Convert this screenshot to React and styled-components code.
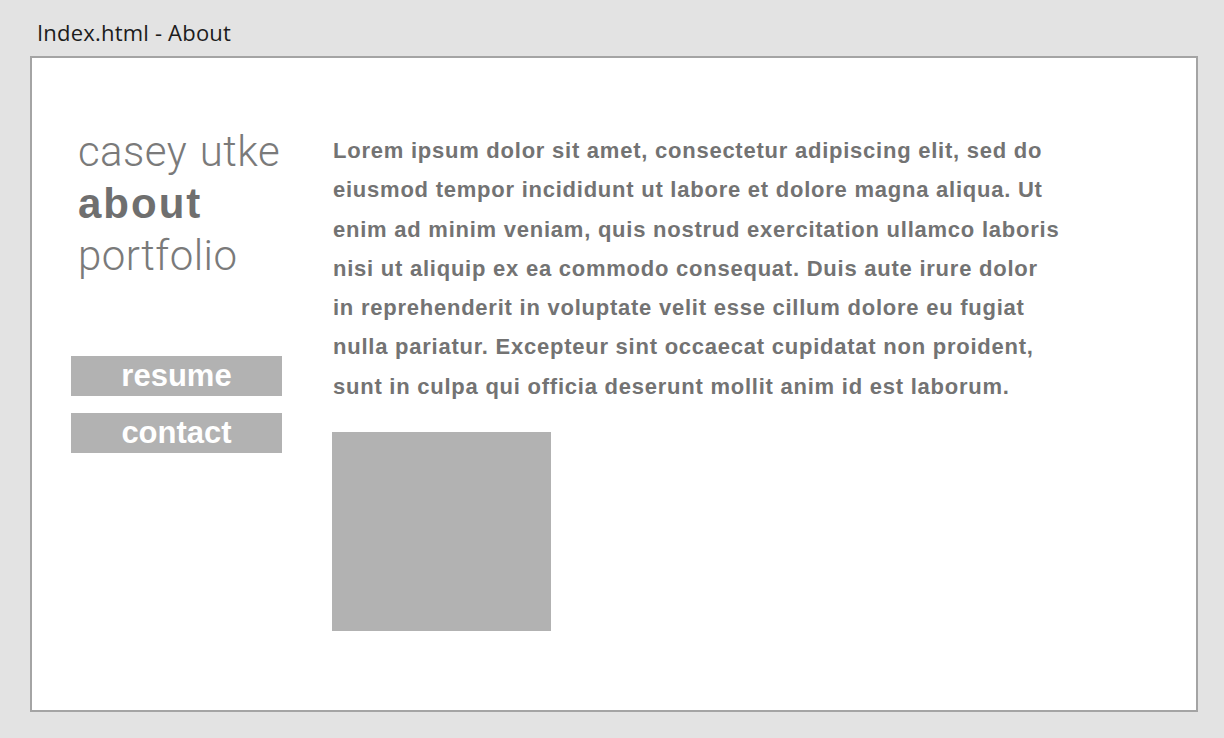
import React from "react";
import styled, { createGlobalStyle } from "styled-components";

const GlobalStyle = createGlobalStyle`
  html, body {
    margin: 0;
    padding: 0;
    background: #e3e3e3;
  }
  body {
    width: 1224px;
    height: 738px;
    overflow: hidden;
  }
`;

const lines = [
  "Lorem ipsum dolor sit amet, consectetur adipiscing elit, sed do",
  "eiusmod tempor incididunt ut labore et dolore magna aliqua. Ut",
  "enim ad minim veniam, quis nostrud exercitation ullamco laboris",
  "nisi ut aliquip ex ea commodo consequat. Duis aute irure dolor",
  "in reprehenderit in voluptate velit esse cillum dolore eu fugiat",
  "nulla pariatur. Excepteur sint occaecat cupidatat non proident,",
  "sunt in culpa qui officia deserunt mollit anim id est laborum.",
];

const App = () => {
  return (
    <Screen>
      <GlobalStyle />
      <WindowTitle>Index.html - About</WindowTitle>
      <Frame>
        {/* left column: name, nav, buttons */}
        <Sidebar>
          <NavList>
            <NavItem>casey utke</NavItem>
            <NavItem active>about</NavItem>
            <NavItem>portfolio</NavItem>
          </NavList>
          <Buttons>
            <GreyButton>resume</GreyButton>
            <GreyButton>contact</GreyButton>
          </Buttons>
        </Sidebar>

        {/* right column: text + picture placeholder */}
        <Content>
          <Body>
            {lines.map((l, i) => (
              <React.Fragment key={i}>
                {l}
                {i < lines.length - 1 && <br />}
              </React.Fragment>
            ))}
          </Body>
          <Placeholder />
        </Content>
      </Frame>
    </Screen>
  );
};

// Style
const Screen = styled.div`
  display: flex;
  flex-direction: column;
  padding: 0 26px 0 30px;
`;
const WindowTitle = styled.div`
  box-sizing: border-box;
  height: 56px;
  padding: 20px 0 0 7px;
  font-family: "Open Sans", "Liberation Sans", sans-serif;
  font-size: 22px;
  letter-spacing: 0.2px;
  line-height: 24px;
  color: #1c1c1c;
`;
const Frame = styled.div`
  box-sizing: border-box;
  width: 1168px;
  height: 656px;
  border: 2px solid #a4a4a4;
  background: #ffffff;
  display: flex;
  align-items: flex-start;
  gap: 50px;
  padding: 66px 0 0 39px;
`;
const Sidebar = styled.div`
  width: 211px;
  display: flex;
  flex-direction: column;
  gap: 74px;
`;
const NavList = styled.div`
  display: flex;
  flex-direction: column;
  padding: 2px 0 0 7px;
`;
const NavItem = styled.div`
  font-family: ${(p) =>
    p.active ? `"Liberation Sans", Arial, sans-serif` : `Roboto, "Liberation Sans", sans-serif`};
  font-size: 42px;
  line-height: 52px;
  font-weight: ${(p) => (p.active ? 700 : 300)};
  letter-spacing: ${(p) => (p.active ? "2px" : "0.45px")};
  word-spacing: 2px;
  white-space: nowrap;
  color: ${(p) => (p.active ? "#6f6f6f" : "#7a7a7a")};
`;
const Buttons = styled.div`
  display: flex;
  flex-direction: column;
  gap: 17px;
`;
const GreyButton = styled.div`
  height: 40px;
  background: #b2b2b2;
  color: #ffffff;
  font-family: "Liberation Sans", Arial, sans-serif;
  font-weight: 700;
  font-size: 31px;
  line-height: 40px;
  text-align: center;
`;
const Content = styled.div`
  display: flex;
  flex-direction: column;
  gap: 26px;
  padding-top: 7px;
`;
const Body = styled.p`
  margin: 0;
  padding-left: 1px;
  font-family: "Liberation Sans", Arial, sans-serif;
  font-weight: 700;
  font-size: 22px;
  letter-spacing: 0.76px;
  line-height: 39.3px;
  color: #737373;
  white-space: nowrap;
`;
const Placeholder = styled.div`
  width: 219px;
  height: 199px;
  background: #b2b2b2;
`;

export default App;
